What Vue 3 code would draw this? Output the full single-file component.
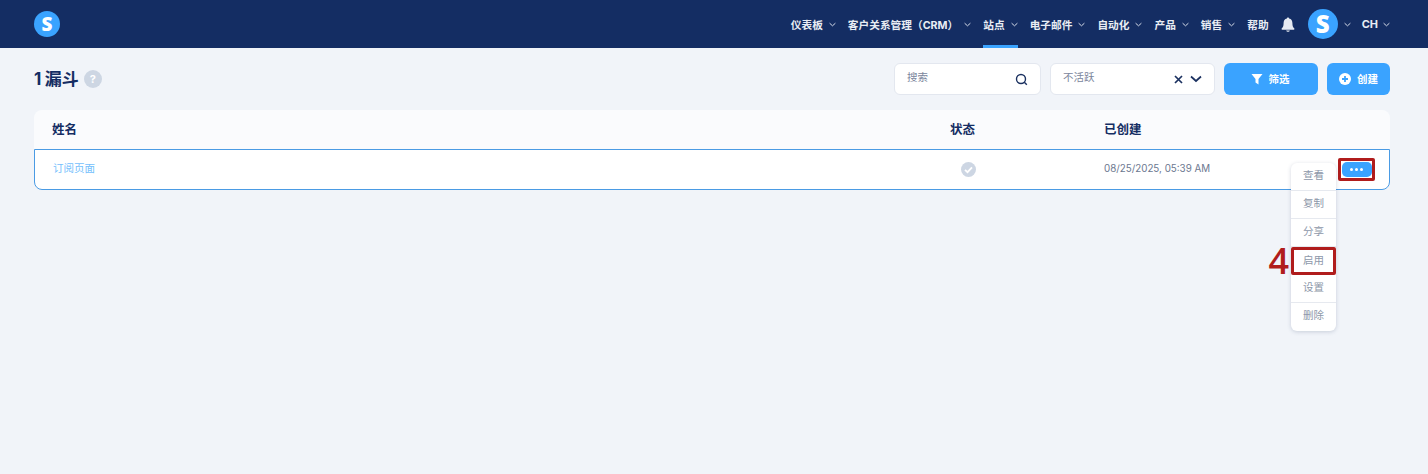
<script setup>
const navItems = [
  { label: '仪表板' },
  { label: '客户关系管理（CRM）' },
  { label: '站点', active: true },
  { label: '电子邮件' },
  { label: '自动化' },
  { label: '产品' },
  { label: '销售' }
]
const menu = [
  { label: '查看' },
  { label: '复制' },
  { label: '分享' },
  { label: '启用', marked: true },
  { label: '设置' },
  { label: '删除' }
]
</script>

<template>
  <div class="page">
    <header class="topbar">
      <div class="brand logo">S</div>
      <nav class="nav">
        <a v-for="item in navItems" :key="item.label" class="nav-item" :class="{ active: item.active }">
          <span>{{ item.label }}</span>
          <svg class="chev" width="7" height="5" viewBox="0 0 7 5"><path d="M.6 1.200 3.500 3.800 6.400 1.200" fill="none" stroke="#d5dbe8" stroke-width="1"/></svg>
        </a>
        <a class="nav-item help"><span>帮助</span></a>
        <svg class="bell" width="14" height="15" viewBox="0 0 14 15"><path d="M7 .5c.7 0 1.100.5 1.100 1.100C10.300 2.100 11.400 3.900 11.400 6c0 3 .6 4.300 1.900 5.600.4.400.1 1.100-.5 1.100H1.200c-.6 0-.9-.7-.5-1.100C2 10.300 2.600 9 2.600 6c0-2.100 1.100-3.900 3.300-4.400C5.900 1 6.300.5 7 .5Z" fill="#e6eaf2"/><path d="M5.200 13.400h3.600C8.700 14.300 7.900 14.800 7 14.800s-1.700-.5-1.800-1.400Z" fill="#e6eaf2"/></svg>
        <div class="brand avatar">S</div>
        <svg class="chev avatar-chev" width="7" height="5" viewBox="0 0 7 5"><path d="M.6 1.200 3.500 3.800 6.400 1.200" fill="none" stroke="#d5dbe8" stroke-width="1"/></svg>
        <span class="lang">CH</span>
        <svg class="chev lang-chev" width="7" height="5" viewBox="0 0 7 5"><path d="M.6 1.200 3.500 3.800 6.400 1.200" fill="none" stroke="#d5dbe8" stroke-width="1"/></svg>
      </nav>
    </header>

    <main class="content">
      <div class="toolbar">
        <div class="title">
          <h1>1 漏斗</h1>
          <span class="help-dot">?</span>
        </div>
        <div class="actions">
          <div class="field search">
            <span>搜索</span>
            <svg width="13" height="13" viewBox="0 0 13 13"><circle cx="6" cy="6" r="4.500" fill="none" stroke="#1b3160" stroke-width="1.400"/><path d="M9.300 9.300 11.800 11.800" stroke="#1b3160" stroke-width="1.400"/></svg>
          </div>
          <div class="field select">
            <span>不活跃</span>
            <svg class="x" width="9" height="9" viewBox="0 0 9 9"><path d="M1 1 8 8M8 1 1 8" stroke="#1b3160" stroke-width="1.700"/></svg>
            <svg width="12" height="8" viewBox="0 0 12 8"><path d="M1 1.500 6 6 11 1.500" fill="none" stroke="#1b3160" stroke-width="1.700"/></svg>
          </div>
          <button class="btn filter">
            <svg width="12" height="12" viewBox="0 0 12 12"><path d="M.5 1h11L7.500 6v5.500L4.500 9.500V6Z" fill="#fff"/></svg>
            <span>筛选</span>
          </button>
          <button class="btn create">
            <svg width="12" height="12" viewBox="0 0 12 12"><circle cx="6" cy="6" r="6" fill="#fff"/><path d="M6 3v6M3 6h6" stroke="#3aa3ff" stroke-width="1.800"/></svg>
            <span>创建</span>
          </button>
        </div>
      </div>

      <section class="table">
        <div class="row head">
          <div class="c-name">姓名</div>
          <div class="c-status">状态</div>
          <div class="c-date">已创建</div>
        </div>
        <div class="row body">
          <div class="c-name link">订阅页面</div>
          <div class="c-status">
            <svg class="check" width="15" height="15" viewBox="0 0 15 15"><circle cx="7.500" cy="7.500" r="7.500" fill="#cdd6e3"/><path d="M4 7.800 6.500 10.200 11 5.300" fill="none" stroke="#fff" stroke-width="1.800"/></svg>
          </div>
          <div class="c-date date">08/25/2025, 05:39 AM</div>
          <span class="more-mark"><button class="more"><i></i><i></i><i></i></button></span>
          <ul class="menu">
            <li v-for="m in menu" :key="m.label" :class="{ marked: m.marked }">
              {{ m.label }}
              <span v-if="m.marked" class="step">4</span>
            </li>
          </ul>
        </div>
      </section>
    </main>
  </div>
</template>

<style>
html, body { margin: 0; background: #f1f4f9; }
</style>

<style scoped>
.page {
  min-height: 474px;
  background: #f1f4f9;
  font-family: Inter, "Noto Sans CJK SC", sans-serif;
  overflow: hidden;
}
.topbar {
  height: 48px;
  background: #142d63;
  display: flex;
  align-items: center;
  justify-content: space-between;
  padding: 0 38px 0 34px;
}
.brand {
  display: flex;
  align-items: center;
  justify-content: center;
  border-radius: 50%;
  background: #3aa3ff;
  color: #fff;
  font-family: "Open Sans", sans-serif;
  font-weight: 800;
  line-height: 1;
}
.logo { width: 26px; height: 26px; font-size: 19px; }
.avatar { width: 30px; height: 30px; font-size: 24px; }
.nav { display: flex; align-items: center; height: 48px; }
.nav-item {
  position: relative;
  display: flex;
  align-items: center;
  height: 48px;
  margin-right: 12px;
  color: #e9edf4;
  font-size: 10.700px;
  font-weight: 700;
  white-space: nowrap;
}
.nav-item .chev { margin-left: 6px; }
.nav-item.active::after {
  content: "";
  position: absolute;
  left: 0;
  right: 0;
  bottom: 0;
  height: 3px;
  background: #3aa3ff;
}
.bell { margin-right: 13px; }
.avatar-chev { margin-left: 6px; }
.lang { margin-left: 11px; color: #e9edf4; font-size: 11px; font-weight: 700; }
.lang-chev { margin-left: 5px; }

.content { padding: 15px 38px 0 34px; }
.toolbar {
  display: flex;
  align-items: center;
  justify-content: space-between;
  height: 32px;
}
.title { display: flex; align-items: center; }
h1 {
  margin: 0;
  color: #142d63;
  font-size: 17px;
  font-weight: 700;
  line-height: 32px;
  word-spacing: -0.500px;
}
.help-dot {
  width: 18px;
  height: 18px;
  margin-left: 5px;
  border-radius: 50%;
  background: #cdd6e3;
  color: #fff;
  font-size: 11px;
  font-weight: 700;
  line-height: 18px;
  text-align: center;
}
.actions { display: flex; align-items: center; }
.field {
  box-sizing: border-box;
  height: 32px;
  display: flex;
  align-items: center;
  background: #fff;
  border: 1px solid #e3e7ef;
  border-radius: 6px;
  color: #7b869c;
  font-size: 10.500px;
  padding: 0 12px;
}
.field span { flex: 1; margin-top: -5px; }
.search { width: 147px; margin-right: 9px; }
.select { width: 165px; margin-right: 9px; }
.select .x { margin-right: 7px; }
.btn {
  height: 32px;
  border: 0;
  border-radius: 6px;
  background: #3aa3ff;
  color: #fff;
  font-family: inherit;
  font-size: 10.500px;
  font-weight: 700;
  display: flex;
  align-items: center;
  justify-content: center;
  gap: 6px;
  padding: 0;
}
.btn span { margin-top: -2px; }
.filter { width: 94px; margin-right: 9px; padding-right: 2px; }
.create { width: 63px; }

.table { margin-top: 15px; }
.row { display: flex; align-items: center; }
.head {
  height: 39px;
  padding-bottom: 2px;
  box-sizing: border-box;
  background: #fafbfd;
  border-radius: 8px 8px 0 0;
  color: #142d63;
  font-size: 12.500px;
  font-weight: 700;
}
.body {
  position: relative;
  box-sizing: border-box;
  height: 41px;
  background: #fff;
  border: 1px solid #4a9be4;
  border-radius: 0 0 8px 8px;
}
.c-name { width: 898px; padding-left: 18px; box-sizing: border-box; }
.c-status { width: 172px; padding-left: 18px; box-sizing: border-box; }
.c-date { flex: 1; }
.body .c-name { width: 897px; }
.body .c-status { display: flex; padding-left: 29px; }
.link { color: #74c0fc; font-size: 10.500px; padding-bottom: 4px; }
.date { color: #6c7890; font-size: 9.800px; padding-bottom: 3px; }
.check { display: block; }
.more-mark {
  position: absolute;
  right: 14px;
  top: 8px;
  box-sizing: border-box;
  width: 37px;
  height: 23px;
  border: 3px solid #b01c1c;
  border-radius: 2px;
  background: #fff;
  display: flex;
  align-items: center;
  justify-content: center;
}
.more {
  width: 30px;
  height: 15px;
  border: 0;
  border-radius: 5px;
  background: #3aa3ff;
  display: flex;
  align-items: center;
  justify-content: center;
  gap: 2px;
  padding: 0;
}
.more i { width: 3px; height: 3px; border-radius: 50%; background: #fff; }
.menu {
  position: absolute;
  left: 1256px;
  top: 13px;
  width: 45px;
  margin: 0;
  padding: 0;
  list-style: none;
  background: #fff;
  border-radius: 6px;
  box-shadow: 0 1px 4px rgba(40, 60, 100, 0.2);
  z-index: 2;
}
.menu li {
  position: relative;
  box-sizing: border-box;
  height: 28px;
  line-height: 26px;
  text-align: center;
  color: #8d97a9;
  font-size: 10.500px;
  border-bottom: 1px solid #e6e9ef;
}
.menu li:last-child { border-bottom: 0; }
.menu li.marked {
  border: 3px solid #b01c1c;
  border-radius: 2px;
  line-height: 21px;
}
.step {
  position: absolute;
  right: 44px;
  top: -9px;
  color: #b01c1c;
  font-family: "Open Sans", sans-serif;
  font-size: 36px;
  font-weight: 600;
  line-height: 40px;
}
</style>
